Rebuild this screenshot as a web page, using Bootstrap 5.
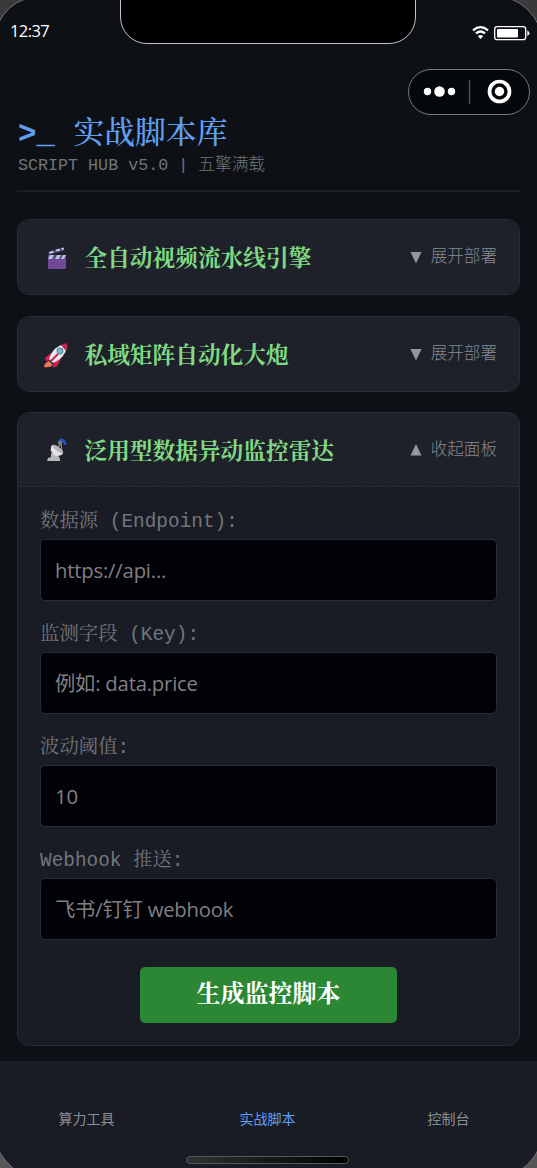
<!DOCTYPE html>
<html lang="zh-CN">
<head>
<meta charset="utf-8">
<meta name="viewport" content="width=device-width, initial-scale=1">
<title>实战脚本库</title>
<link href="https://cdn.jsdelivr.net/npm/bootstrap@5.3.0/dist/css/bootstrap.min.css" rel="stylesheet">
<style>
body{margin:0;background:#0d1116;overflow:hidden;font-family:"Open Sans","Noto Sans CJK SC",sans-serif}
.phone{width:537px;height:1168px;background:#0d1116;overflow:hidden}
.mono{font-family:"Liberation Mono","Noto Serif CJK SC","Noto Sans CJK SC",monospace}
.statusbar{height:113px;padding:20px 7px 0 10px;color:#fff;font-size:16.5px;line-height:22px;letter-spacing:-.6px}
.notch{left:120px;top:-2px;width:296px;height:46px;background:#000;border:1px solid #c2c4c7;border-radius:0 0 27px 27px}
.capsule{left:408px;top:69px;width:122px;height:46px;border:1.5px solid #777a7e;border-radius:23px;background:#06090c}
.page-head{margin:0 17px;padding:3px 0 0 1px;height:79px;border-bottom:2px solid #1c2026}
.page-title{margin:0;font-size:30.8px;line-height:37px;font-weight:500;color:#619eef;white-space:pre}
.page-title b{font-weight:700}
.page-sub{font-size:16.7px;line-height:26px;color:#70757b;white-space:pre}
.page-sub,.toggle{font-family:"Liberation Mono","Noto Sans CJK SC",monospace;font-weight:300}
.panels{padding:27px 17px 0;gap:21px;height:869px}
.panel{--bs-card-bg:#191c24;--bs-card-border-color:#292d33;--bs-card-border-radius:12px;--bs-card-inner-border-radius:11px;overflow:hidden}
.panel-head{height:74px;padding:0 22px 0 25px;background:#1e2129}
.panel.opened{margin-top:-1px;height:634px}
.panel.opened .panel-head{border-bottom:1px dashed #2c3036}
.panel-title{font-size:22.7px;font-weight:700;color:#80da83;line-height:30px;margin-left:13.5px;padding-top:6px}
.toggle{font-size:16.6px;line-height:24px;color:#858990;margin-top:2px}
.toggle svg{margin-right:9px;margin-top:-1px}
.panel-body{padding:21px 22px 0}
.field-label{font-size:19.4px;line-height:28px;height:28px;color:#70767d;white-space:pre;margin:0 0 3px}
.field{height:62px;margin-bottom:20px}
.field .form-control{height:62px;padding:0 14px 1px;background:#010108;border:1px solid #292d31;border-radius:5px;color:#ccc;font-family:"Open Sans","Noto Sans CJK SC",sans-serif;font-size:20.3px;letter-spacing:-.2px}
.field .form-control::placeholder{color:#808080;opacity:1}
.run-btn{width:257px;height:56px;padding:2px 0 0;background:#2c8734;border:0;border-radius:5px;color:#fff;font-size:24px;font-weight:700}
.run-row{padding-top:7px}
.tabs{height:107px;background:#191c24;padding-top:8px;margin:0 -3px}
.tabs .nav-link{font-size:14px;color:#8a8e94;padding:0 2px 0 0}
.tabs .nav-link.active{color:#609cf0}
.home-bar{left:186px;top:1156px;width:163px;height:8px;border:1px solid #555958;border-radius:4px;background:linear-gradient(90deg,#30332f,#000)}
</style>
</head>
<body>
<div class="phone position-relative d-flex flex-column">
  <div class="statusbar d-flex justify-content-between align-items-start">
    <span>12:37</span>
    <svg width="59" height="22" viewBox="0 0 59 22" fill="none" stroke="#fff">
      <path d="M2 10.3Q9.5 4 17 10.3M5 13.4Q9.5 9.6 14 13.4" stroke-width="2.3"/>
      <path d="M6.8 16.2Q9.5 14 12.2 16.2L9.5 19z" fill="#fff" stroke="none"/>
      <rect x="23.7" y="6.7" width="31" height="13" rx="2.5" stroke-width="1.3"/>
      <rect x="26" y="9" width="21" height="8.5" rx="1" fill="#fff" stroke="none"/>
      <path d="M56.3 10.3q4.2 2.9 0 5.8z" fill="#fff" stroke="none"/>
    </svg>
  </div>
  <header class="page-head mono">
    <h1 class="page-title"><b>&gt;_</b> 实战脚本库</h1>
    <div class="page-sub">SCRIPT HUB v5.0 | 五擎满载</div>
  </header>
  <main class="panels d-flex flex-column flex-shrink-0 mono">
    <section class="card panel flex-shrink-0">
      <div class="panel-head d-flex align-items-center">
        <svg class="mt-1" width="28" height="28" viewBox="0 1 28 28">
          <path d="M5 8L20 3.5l1 3L6 11z" fill="#494b73"/><path d="M6 8l4-1.2 1 1.8-4 1.2zM12.5 5.8l4-1.2.8 1.8-4 1.2zM18 4.2l2.5-.8.7 2-2 .6z" fill="#c4c7e8"/>
          <rect x="5" y="11" width="18" height="14" rx="1.5" fill="#704897"/><path d="M5 11h18v4H5z" fill="#504f80"/><path d="M7 11h4l-2 4H5zM14 11h4l-2 4h-4zM20 11h3l-2 4h-3z" fill="#bcbfe5"/>
        </svg>
        <span class="panel-title">全自动视频流水线引擎</span>
        <span class="toggle d-flex align-items-center ms-auto"><svg width="12" height="12"><path d="M.5 0h11L6 11.5z" fill="#94979d"/></svg>展开部署</span>
      </div>
    </section>
    <section class="card panel flex-shrink-0">
      <div class="panel-head d-flex align-items-center">
        <svg class="mt-1" width="28" height="28" viewBox="0 1 28 28">
          <path d="M8 12L2 17l1 3 6-1 2 2-1 6 4-2 4-7z" fill="#d72455"/><path d="M6 20l4 4q-3 3-9 2 0-4 5-6" fill="#ef7650"/>
          <path d="M6 18Q10 5 22 3q3 0 2 3-2 11-14 16z" fill="#e9eaf0"/><path d="M18 4q7-4 6 1 0 2-1 5z" fill="#ca2051"/><path d="M8 20l7-7" stroke="#c72454" stroke-width="2"/><circle cx="17" cy="10" r="3.4" fill="#568ba2"/><circle cx="17" cy="10" r="2.2" fill="#82bacb"/>
        </svg>
        <span class="panel-title">私域矩阵自动化大炮</span>
        <span class="toggle d-flex align-items-center ms-auto"><svg width="12" height="12"><path d="M.5 0h11L6 11.5z" fill="#94979d"/></svg>展开部署</span>
      </div>
    </section>
    <section class="card panel opened flex-shrink-0">
      <div class="panel-head d-flex align-items-center">
        <svg class="mt-1" width="28" height="28" viewBox="0 2 28 28">
          <path d="M8 17l7 2 2 4v2H4l1-3 3-1z" fill="#b7b9bb"/>
          <path d="M14 13l4-6 1 9" fill="none" stroke="#8a8d93" stroke-width="1.3"/>
          <path d="M9 9q-3 5 1 9 4 4 10 0z" fill="#e3e3e2"/><path d="M9 9q1 3 4 5 4 3 7 4 1-3-3-6-5-4-8-3" fill="#b4b6b7"/>
          <circle cx="17" cy="6.5" r="2.2" fill="#747b87"/><path d="M16.5 3q6-2 7 6H21q-.5-4-4.5-4z" fill="#2454bd"/>
        </svg>
        <span class="panel-title">泛用型数据异动监控雷达</span>
        <span class="toggle d-flex align-items-center ms-auto"><svg width="12" height="12"><path d="M.5 11.5h11L6 0z" fill="#94979d"/></svg>收起面板</span>
      </div>
      <form class="panel-body" onsubmit="return false">
        <label class="field-label d-block" for="endpoint">数据源 (Endpoint):</label>
        <div class="field"><input id="endpoint" class="form-control" placeholder="https://api..."></div>
        <label class="field-label d-block" for="key">监测字段 (Key):</label>
        <div class="field"><input id="key" class="form-control" placeholder="例如: data.price"></div>
        <label class="field-label d-block" for="limit">波动阈值:</label>
        <div class="field"><input id="limit" class="form-control" placeholder="10"></div>
        <label class="field-label d-block" for="hook">Webhook 推送:</label>
        <div class="field"><input id="hook" class="form-control" placeholder="飞书/钉钉 webhook"></div>
        <div class="run-row text-center"><button class="btn run-btn" type="submit">生成监控脚本</button></div>
      </form>
    </section>
  </main>
  <nav class="tabs nav nav-fill flex-shrink-0 align-items-center">
    <a class="nav-link col-4" href="#">算力工具</a>
    <a class="nav-link col-4 active" href="#">实战脚本</a>
    <a class="nav-link col-4" href="#">控制台</a>
  </nav>
  <div class="notch position-absolute"></div>
  <div class="capsule position-absolute">
    <svg class="d-block" width="120" height="44" viewBox="0 0 120 44" fill="#fff">
      <circle cx="18.5" cy="21.5" r="3.7"/><circle cx="30.5" cy="21.5" r="5.3"/><circle cx="42.5" cy="21.5" r="3.7"/>
      <path d="M60.5 10v24" stroke="#55585b" stroke-width="1.3"/>
      <circle cx="90.5" cy="21.5" r="10" fill="none" stroke="#fff" stroke-width="3.7"/><circle cx="90.5" cy="21.5" r="4.7"/>
    </svg>
  </div>
  <div class="home-bar position-absolute"></div>
  <svg class="position-absolute top-0 start-0 pe-none" width="537" height="1168" fill="#3a3a3b" stroke="#85878a" stroke-width=".8">
    <path d="M-2 24Q7 5 25-1H-2z"/><path d="M539 26Q530 6 511-1h28z"/>
    <path d="M-2 1150Q5 1162 14 1169H-2z" fill="#555655"/><path d="M539 1148Q533 1161 522 1169h17z" fill="#555655"/>
  </svg>
</div>
<script src="https://cdn.jsdelivr.net/npm/bootstrap@5.3.0/dist/js/bootstrap.bundle.min.js"></script>
</body>
</html>
